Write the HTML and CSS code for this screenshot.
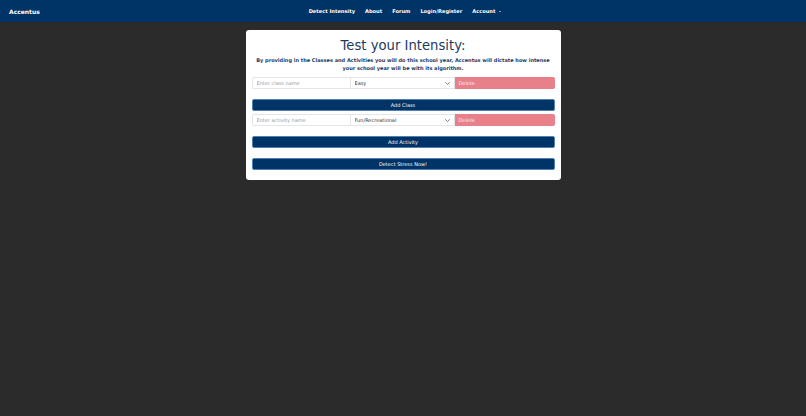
FILE: index.html
```html
<!DOCTYPE html>
<html lang="en">
<head>
<meta charset="utf-8">
<title>Accentus</title>
<link rel="stylesheet" href="styles.css">
</head>
<body>
<nav class="navbar">
  <a class="brand" href="#">Accentus</a>
  <ul class="nav-links">
    <li><a href="#">Detect Intensity</a></li>
    <li><a href="#">About</a></li>
    <li><a href="#">Forum</a></li>
    <li><a href="#">Login/Register</a></li>
    <li><a href="#" class="dropdown">Account<span class="caret"></span></a></li>
  </ul>
  <div class="nav-spacer"></div>
</nav>
<main class="card">
  <h1 class="title">Test your Intensity:</h1>
  <p class="subtitle">By providing in the Classes and Activities you will do this school year, Accentus will dictate how intense your school year will be with its algorithm.</p>
  <div class="row">
    <input class="field" type="text" placeholder="Enter class name">
    <div class="select-wrap">
      <select class="select"><option>Easy</option></select>
      <svg class="chev" viewBox="0 0 10 6" width="5" height="3"><path d="M1 1l4 4 4-4" fill="none" stroke="#666" stroke-width="1.6" stroke-linecap="round" stroke-linejoin="round"/></svg>
    </div>
    <button class="btn-delete" disabled>Delete</button>
  </div>
  <button class="btn-primary add-class">Add Class</button>
  <div class="row">
    <input class="field" type="text" placeholder="Enter activity name">
    <div class="select-wrap">
      <select class="select"><option>Fun/Recreational</option></select>
      <svg class="chev" viewBox="0 0 10 6" width="5" height="3"><path d="M1 1l4 4 4-4" fill="none" stroke="#666" stroke-width="1.6" stroke-linecap="round" stroke-linejoin="round"/></svg>
    </div>
    <button class="btn-delete" disabled>Delete</button>
  </div>
  <button class="btn-primary add-activity">Add Activity</button>
  <button class="btn-primary detect">Detect Stress Now!</button>
</main>
</body>
</html>
```
FILE: styles.css
```css
* { box-sizing: border-box; }
html, body { margin: 0; padding: 0; }
body {
  background: #2b2b2b;
  font-family: "DejaVu Sans", Verdana, sans-serif;
  min-height: 416px;
}
.navbar {
  height: 22px;
  background: #003466;
  display: grid;
  grid-template-columns: 1fr auto 1fr;
  align-items: center;
  padding: 0 9px;
}
.brand {
  color: #fff;
  font-weight: bold;
  font-size: 6px;
  text-decoration: none;
}
.nav-links {
  list-style: none;
  margin: 0;
  padding: 0 0 0 4px;
  display: flex;
  gap: 10px;
}
.nav-links a {
  color: #fff;
  font-weight: bold;
  font-size: 5.1px;
  text-decoration: none;
  display: flex;
  align-items: center;
}
.caret {
  display: inline-block;
  width: 0;
  height: 0;
  margin-left: 4px;
  border-left: 1.5px solid transparent;
  border-right: 1.5px solid transparent;
  border-top: 1.5px solid #fff;
}
.card {
  width: 315px;
  margin: 8px auto 0;
  background: #fff;
  border-radius: 3px;
  padding: 6px 6px 10px;
  display: flex;
  flex-direction: column;
}
.title {
  margin: 2px 0 0;
  font-size: 13.2px;
  line-height: 16px;
  font-weight: normal;
  text-align: center;
  color: #1c3b61;
}
.subtitle {
  margin: 2px 4px 5px;
  font-size: 5px;
  line-height: 8px;
  font-weight: bold;
  text-align: center;
  color: #1b3a63;
}
.row {
  display: flex;
  height: 12px;
}
.field {
  display: block;
  width: 98px;
  height: 12px;
  margin: 0;
  border: 1px solid #e3e6e9;
  border-right: none;
  border-radius: 2px 0 0 2px;
  padding: 0 4px;
  font-family: inherit;
  font-size: 5px;
  color: #333;
  outline: none;
  background: #fff;
}
.field::placeholder { color: #9a9a9a; }
.select-wrap {
  position: relative;
  width: 105px;
  height: 12px;
}
.select {
  display: block;
  appearance: none;
  -webkit-appearance: none;
  width: 100%;
  height: 12px;
  margin: 0;
  border: 1px solid #e3e6e9;
  border-radius: 0;
  padding: 0 4px;
  font-family: inherit;
  font-size: 5px;
  line-height: 10px;
  color: #333;
  background: #fff;
  outline: none;
}
.chev {
  position: absolute;
  right: 5px;
  top: 5px;
}
.btn-delete {
  display: block;
  flex: 1;
  height: 12px;
  margin: 0;
  border: none;
  border-radius: 0 2px 2px 0;
  background: #e8808a;
  color: #fde9eb;
  font-family: inherit;
  font-size: 5px;
  text-align: left;
  padding: 0 4px;
}
.btn-primary {
  display: block;
  height: 12px;
  margin: 0;
  border: 1px solid #4f80b3;
  border-radius: 2px;
  background: #003466;
  color: #fff;
  font-family: inherit;
  font-size: 5px;
  padding: 0;
}
.add-class { margin-top: 10px; margin-bottom: 3px; }
.add-activity { margin-top: 10px; }
.detect { margin-top: 10px; }
```
